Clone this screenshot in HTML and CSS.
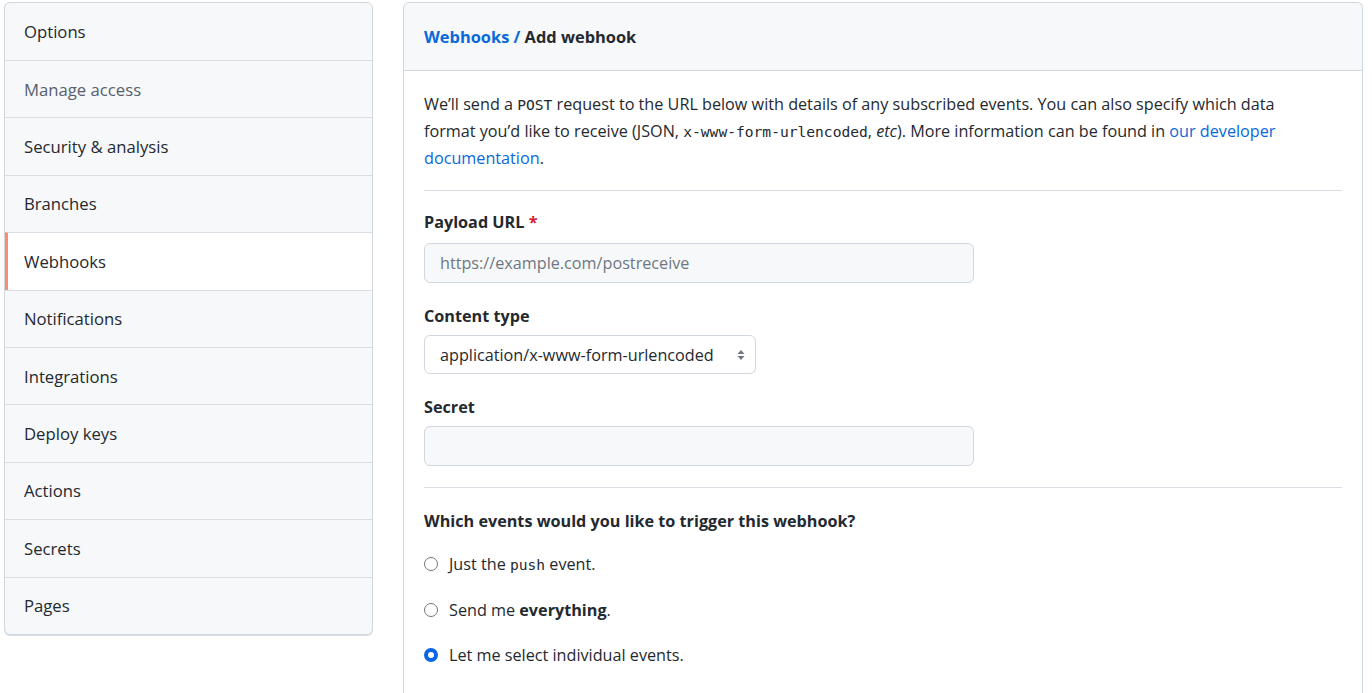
FILE: index.html
```html
<!DOCTYPE html>
<html>
<head>
<meta charset="utf-8">
<link rel="stylesheet" href="styles.css">
</head>
<body>
<div class="layout">
  <nav class="menu">
    <a class="menu-item">Options</a>
    <a class="menu-item muted">Manage access</a>
    <a class="menu-item">Security &amp; analysis</a>
    <a class="menu-item">Branches</a>
    <a class="menu-item selected">Webhooks</a>
    <a class="menu-item">Notifications</a>
    <a class="menu-item">Integrations</a>
    <a class="menu-item">Deploy keys</a>
    <a class="menu-item">Actions</a>
    <a class="menu-item">Secrets</a>
    <a class="menu-item">Pages</a>
  </nav>
  <main class="box">
    <div class="box-header"><span><a class="link">Webhooks</a> <span class="link">/</span> Add webhook</span></div>
    <div class="box-body">
      <p class="intro">We’ll send a <code>POST</code> request to the URL below with details of any subscribed events. You can also specify which data<br>format you’d like to receive (JSON, <code>x-www-form-urlencoded</code>, <em>etc</em>). More information can be found in <a class="link">our developer<br>documentation</a>.</p>
      <hr class="divider">
      <div class="field">
        <label class="label">Payload URL <span class="req">*</span></label>
        <div class="input placeholder">https://example.com/postreceive</div>
      </div>
      <div class="field">
        <label class="label tight">Content type</label>
        <div class="select"><span>application/x-www-form-urlencoded</span>
          <svg class="arrows" width="8" height="12" viewBox="0 0 8 12"><path d="M4 1 L7.5 5 H0.5 Z M4 11 L7.5 7 H0.5 Z" fill="#6e7781"/></svg>
        </div>
      </div>
      <div class="field">
        <label class="label tight">Secret</label>
        <div class="input"></div>
      </div>
      <hr class="divider second">
      <div class="label events-title">Which events would you like to trigger this webhook?</div>
      <div class="radio-row"><span class="radio"></span><span>Just the <code>push</code> event.</span></div>
      <div class="radio-row"><span class="radio"></span><span>Send me <strong>everything</strong>.</span></div>
      <div class="radio-row"><span class="radio checked"></span><span>Let me select individual events.</span></div>
    </div>
  </main>
</div>
</body>
</html>
```
FILE: styles.css
```css
* { box-sizing: border-box; }
html, body { margin: 0; background: #fff; }
body {
  font-family: "Open Sans", "Noto Sans", sans-serif;
  font-size: 16.2px;
  color: #24292f;
  padding: 2px 0 0 4px;
  overflow: hidden;
  height: 693px;
}
.layout { display: flex; align-items: flex-start; gap: 30px; }
.menu {
  width: 369px;
  flex: none;
  border: 1px solid #d0d7de;
  border-radius: 6px;
  overflow: hidden;
  background: #f6f8fa;
  box-shadow: 0 1px 0 #d8dee4;
  font-size: 16.7px;
}
.menu-item {
  display: flex;
  align-items: center;
  height: 57.4px;
  padding-left: 19px;
  border-top: 1px solid #d8dee4;
  color: #24292f;
}
.menu-item:first-child { border-top: none; height: 57px; }
.menu-item.muted { color: #57606a; }
.menu-item.selected {
  background: #fff;
  border-left: 3px solid #fd8c73;
  padding-left: 16px;
}
.box {
  width: 960px;
  flex: none;
  border: 1px solid #d0d7de;
  border-radius: 6px 6px 0 0;
  border-bottom: none;
  min-height: 700px;
}
.box-header {
  height: 68px;
  background: #f6f8fa;
  border-bottom: 1px solid #d0d7de;
  border-radius: 6px 6px 0 0;
  display: flex;
  align-items: center;
  padding-left: 20px;
  font-weight: 700;
  font-size: 16.4px;
}
.link { color: #0969da; }
.box-body { padding: 20px 20px 0 20px; }
.intro { margin: 0; line-height: 27px; }
code {
  font-family: "DejaVu Sans Mono", "Liberation Mono", monospace;
  font-size: 14.6px;
  line-height: 1;
}
em { font-style: italic; }
.divider {
  border: 0;
  border-top: 1px solid #d8dee4;
  margin: 18px 0 19px 0;
}
.divider.second { margin: 19px 0 21px 0; }
.field { margin-bottom: 21px; }
.label { display: block; font-weight: 700; line-height: 24px; margin-bottom: 9px; }
.label.tight { margin-bottom: 7px; }
.req { color: #cf222e; }
.input {
  width: 550px;
  height: 40px;
  background: #f6f8fa;
  border: 1px solid #d0d7de;
  border-radius: 6px;
  padding: 0 15px;
  display: flex;
  align-items: center;
}
.placeholder { color: #6e7781; }
.select {
  display: flex;
  justify-content: space-between;
  align-items: center;
  width: 332px;
  height: 39px;
  border: 1px solid #d0d7de;
  border-radius: 6px;
  padding: 0 10px 0 15px;
  background: #fff;
}
.arrows { display: block; }
.events-title { margin-bottom: 19px; }
.radio-row {
  display: flex;
  align-items: center;
  height: 24px;
  margin-bottom: 21.5px;
}
.radio {
  width: 14px;
  height: 14px;
  border-radius: 50%;
  border: 1px solid #767676;
  margin: 0 11px 0 0;
  flex: none;
  background: #fff;
}
.radio.checked {
  border: 4px solid #0a66e4;
  background: #fff;
}
strong { font-weight: 700; }
```
